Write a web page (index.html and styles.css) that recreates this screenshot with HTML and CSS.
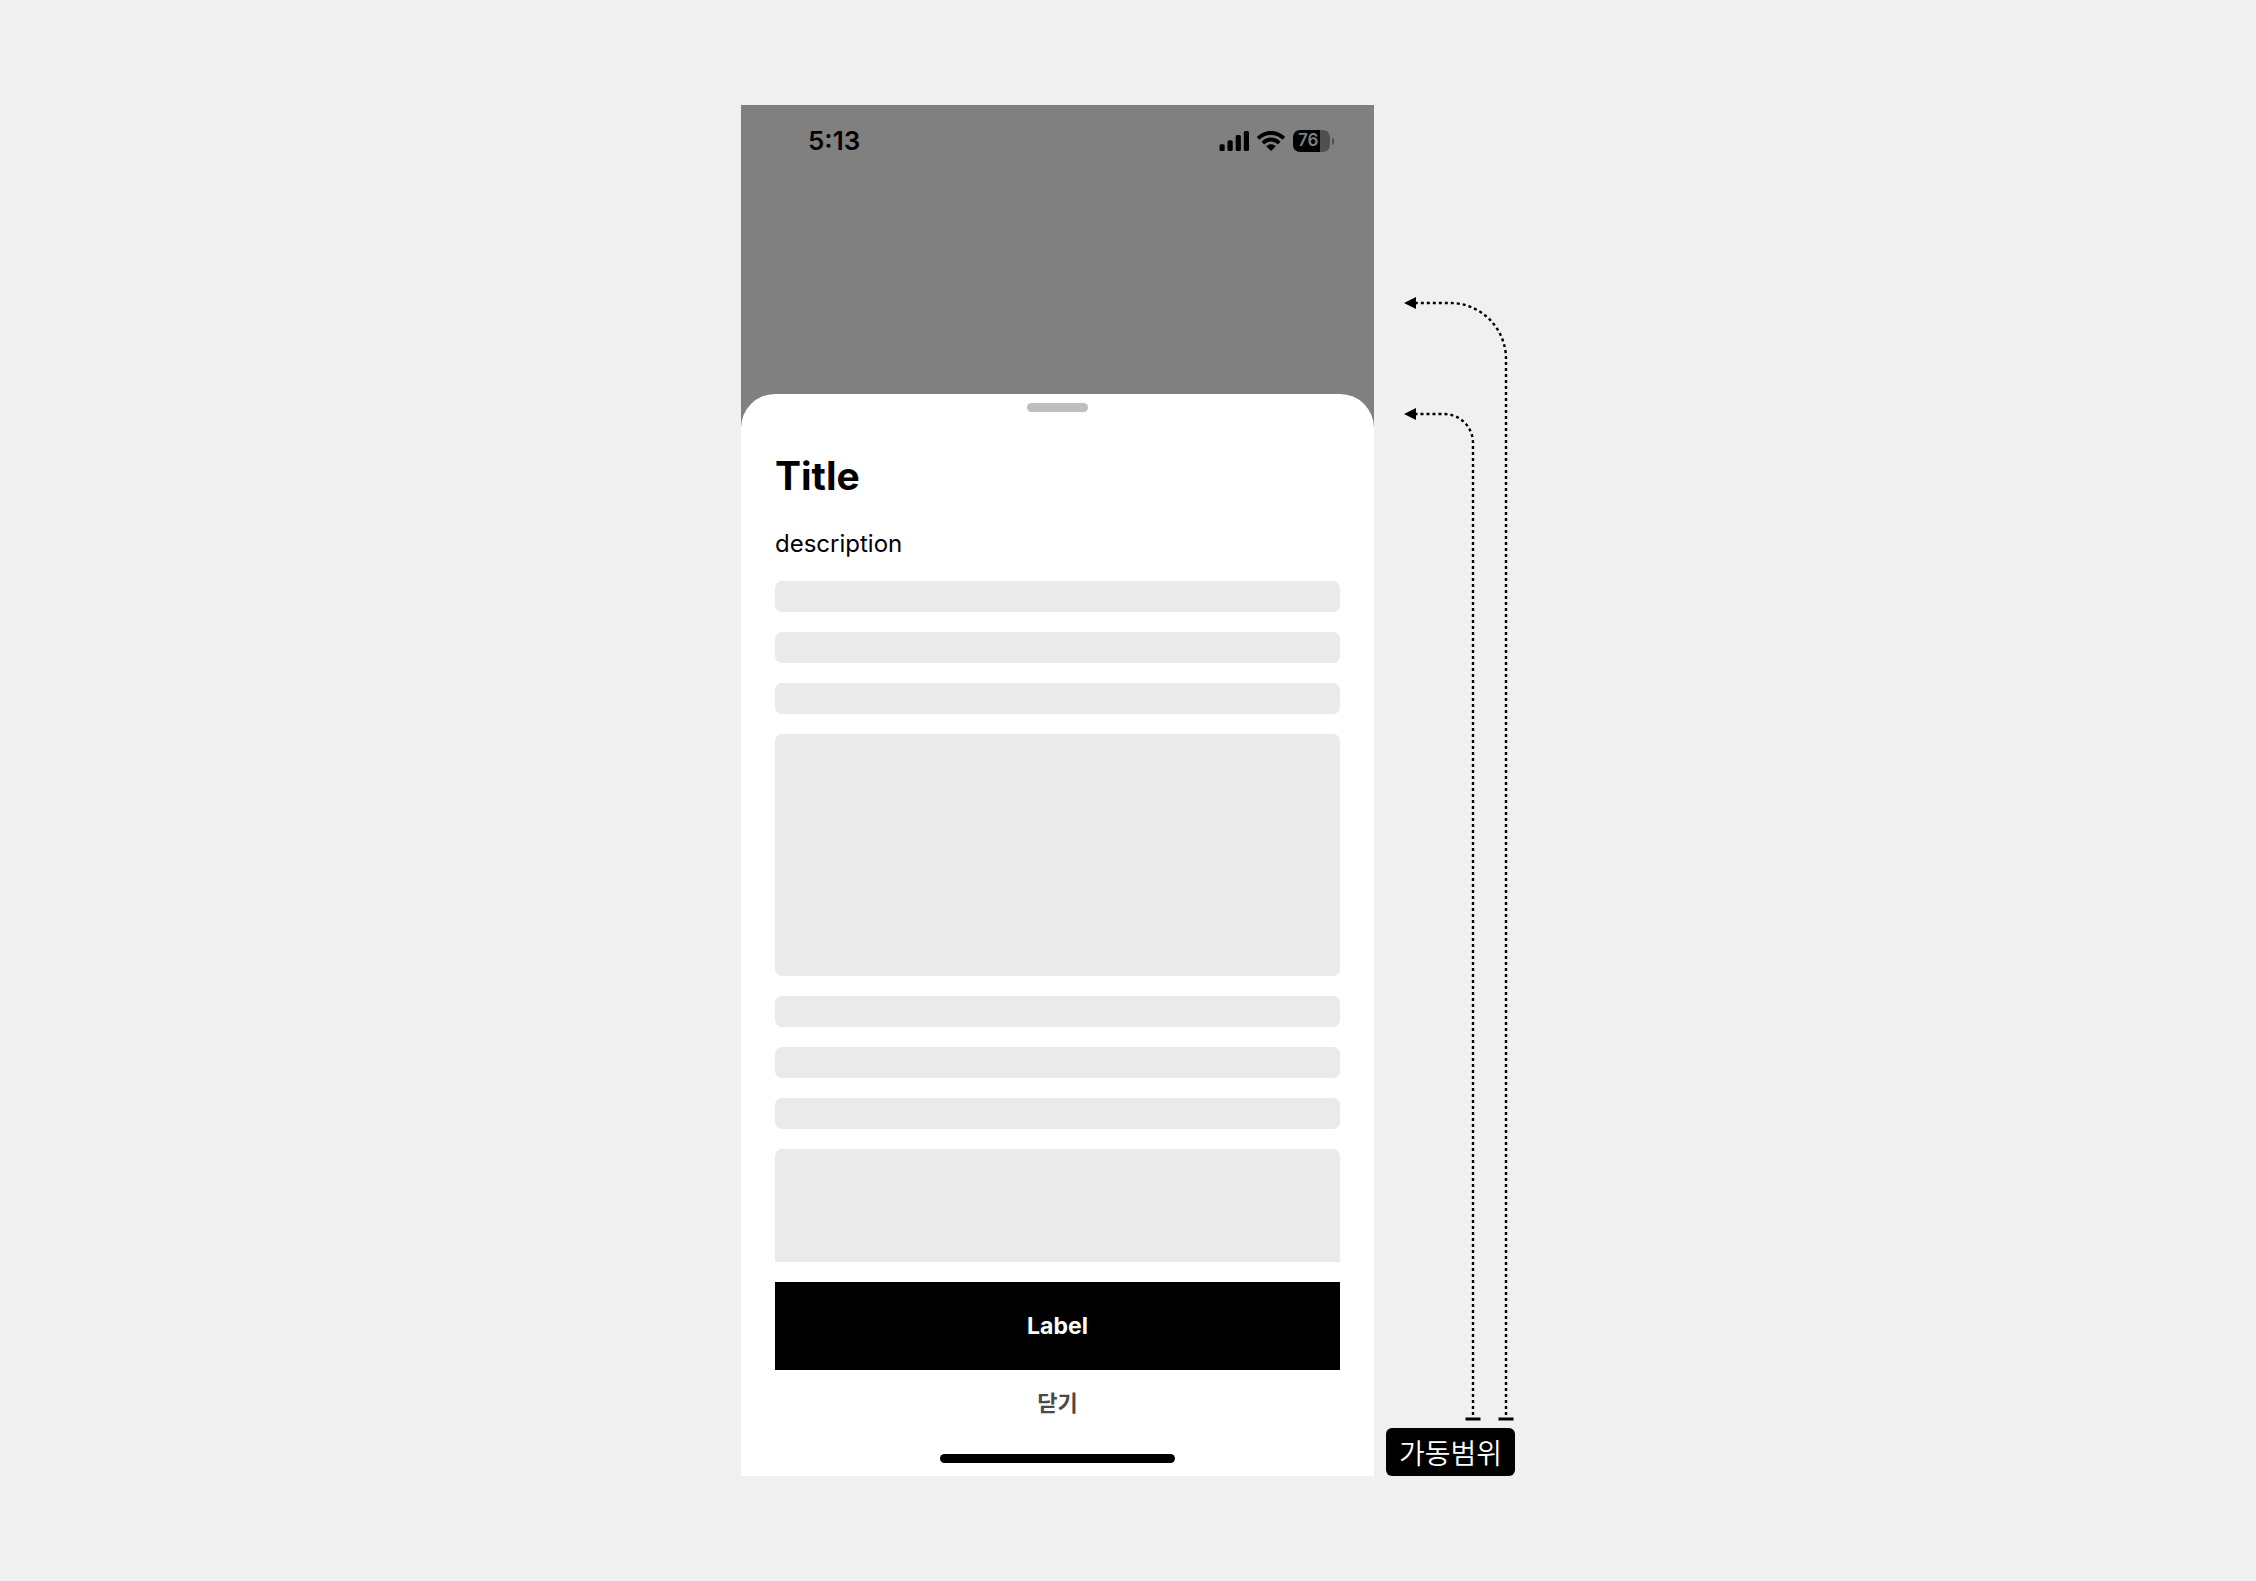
FILE: index.html
```html
<!DOCTYPE html>
<html lang="ko">
<head>
  <meta charset="utf-8">
  <meta name="viewport" content="width=device-width, initial-scale=1">
  <title>Bottom sheet</title>
  <link rel="stylesheet" href="styles.css">
</head>
<body>
  <main class="stage">
    <section class="phone">
      <header class="status">
        <span class="status-time">5:13</span>
        <div class="status-icons">
          <svg class="signal" viewBox="0 0 30 20" width="30" height="20" aria-hidden="true">
            <rect x=".5" y="13.3" width="5.200" height="6.700" rx="1.500"/>
            <rect x="8.500" y="9.200" width="5.200" height="10.800" rx="1.500"/>
            <rect x="16.700" y="4" width="5.200" height="16" rx="1.500"/>
            <rect x="24.800" y="0" width="5.200" height="20" rx="1.500"/>
          </svg>
          <svg class="wifi" viewBox="0 0 28 20" width="28" height="20" aria-hidden="true">
            <path d="M14 0C8.700 0 3.900 2 .3 5.500a.7.7 0 0 0 0 1l1.700 1.700a.7.7 0 0 0 1 0C5.900 5.400 9.800 3.900 14 3.900s8.100 1.500 11 4.300a.7.7 0 0 0 1 0l1.700-1.700a.7.7 0 0 0 0-1C24.100 2 19.300 0 14 0z"/>
            <path d="M14 6.600c-3.400 0-6.600 1.300-9 3.600a.7.7 0 0 0 0 1l1.700 1.700a.7.7 0 0 0 1 0c1.700-1.600 3.900-2.500 6.300-2.500s4.600.9 6.300 2.500a.7.7 0 0 0 1 0l1.700-1.700a.7.7 0 0 0 0-1c-2.400-2.300-5.600-3.600-9-3.600z"/>
            <path d="M14 13.200c-1.600 0-3.100.6-4.300 1.600a.7.7 0 0 0 0 1l3.800 3.800a.7.7 0 0 0 1 0l3.800-3.800a.7.7 0 0 0 0-1c-1.200-1-2.700-1.600-4.300-1.600z"/>
          </svg>
          <div class="battery">
            <span class="battery-level">76</span>
            <span class="battery-tip"></span>
          </div>
        </div>
      </header>

      <article class="sheet">
        <div class="grabber"></div>
        <h1 class="title">Title</h1>
        <p class="description">description</p>
        <div class="content">
          <div class="bone"></div>
          <div class="bone"></div>
          <div class="bone"></div>
          <div class="bone bone-large"></div>
          <div class="bone"></div>
          <div class="bone"></div>
          <div class="bone"></div>
          <div class="bone bone-cut"></div>
        </div>
        <button class="action" type="button">Label</button>
        <button class="close" type="button">닫기</button>
        <div class="home-bar"></div>
      </article>
    </section>

    <aside class="range">
      <svg class="range-arrows" viewBox="0 0 129 1140" width="129" height="1140" aria-hidden="true">
        <g fill="none" stroke="#000" stroke-width="2.400" stroke-dasharray="3 3">
          <path d="M120 1127V71A56 56 0 0 0 64 15H30"/>
          <path d="M87 1127V155A29 29 0 0 0 58 126H30"/>
        </g>
        <path d="M18 15L30 9v12zM18 126L30 120v12z"/>
        <path d="M79.500 1129.500h15v3h-15zM112.500 1129.500h15v3h-15z"/>
      </svg>
      <div class="range-tag">가동범위</div>
    </aside>
  </main>
</body>
</html>
```
FILE: styles.css
```css
* {
  box-sizing: border-box;
}

body {
  margin: 0;
  background: #f0f0f0;
  color: #000;
  font-family: Inter, "Noto Sans CJK KR", sans-serif;
}

.stage {
  display: flex;
  justify-content: center;
  align-items: center;
  gap: 12px;
  min-height: 100vh;
}

.phone {
  flex: 0 1 633px;
  background: #808080;
}

.status {
  display: flex;
  justify-content: space-between;
  align-items: center;
  height: 72px;
  padding: 0 40px 0 67px;
}

.status-time {
  font-size: 26px;
  font-weight: 600;
  line-height: 32px;
}

.status-icons {
  display: flex;
  align-items: center;
  gap: 8px;
}

.battery {
  display: flex;
  align-items: center;
  gap: 2px;
}

.battery-level {
  width: 37px;
  height: 22px;
  padding-left: 5px;
  border-radius: 7px;
  background: linear-gradient(to right, #000 27px, #505050 27px);
  color: #808080;
  font-size: 17px;
  font-weight: 600;
  line-height: 20px;
}

.battery-tip {
  width: 2px;
  height: 7px;
  border-radius: 0 4px 4px 0;
  background: #505050;
}

.sheet {
  display: flex;
  flex-direction: column;
  margin-top: 217px;
  padding: 9px 34px 13px;
  border-radius: 34px 34px 0 0;
  background: #fff;
}

.grabber {
  align-self: center;
  width: 61px;
  height: 9px;
  border-radius: 5px;
  background: #bebebe;
}

.title {
  margin: 40px 0 28px;
  font-size: 39px;
  font-weight: 700;
  line-height: 48px;
}

.description {
  margin: 0 0 21px;
  font-size: 24px;
  line-height: 32px;
}

.content {
  display: grid;
  gap: 20px;
}

.bone {
  height: 31px;
  border-radius: 7px;
  background: #eaeaea;
}

.bone-large {
  height: 242px;
}

.bone-cut {
  height: 113px;
  border-radius: 7px 7px 0 0;
}

.action,
.close {
  border: 0;
  font: inherit;
  cursor: pointer;
}

.action {
  margin-top: 20px;
  padding: 28px;
  background: #000;
  color: #fff;
  font-size: 23px;
  font-weight: 700;
  line-height: 32px;
}

.close {
  padding: 17px 16px;
  background: none;
  color: #4a4a4a;
  font-size: 22px;
  font-weight: 600;
  line-height: 32px;
}

.home-bar {
  align-self: center;
  width: 235px;
  height: 9px;
  margin-top: 18px;
  border-radius: 5px;
  background: #000;
}

.range {
  flex: none;
  align-self: stretch;
  display: flex;
  flex-direction: column;
  justify-content: center;
  padding-top: 183px;
}

.range-arrows {
  display: block;
}

.range-tag {
  padding: 10px 0 6px;
  border-radius: 6px;
  background: #000;
  color: #fff;
  font-size: 28px;
  font-weight: 350;
  line-height: 32px;
  text-align: center;
}
```
